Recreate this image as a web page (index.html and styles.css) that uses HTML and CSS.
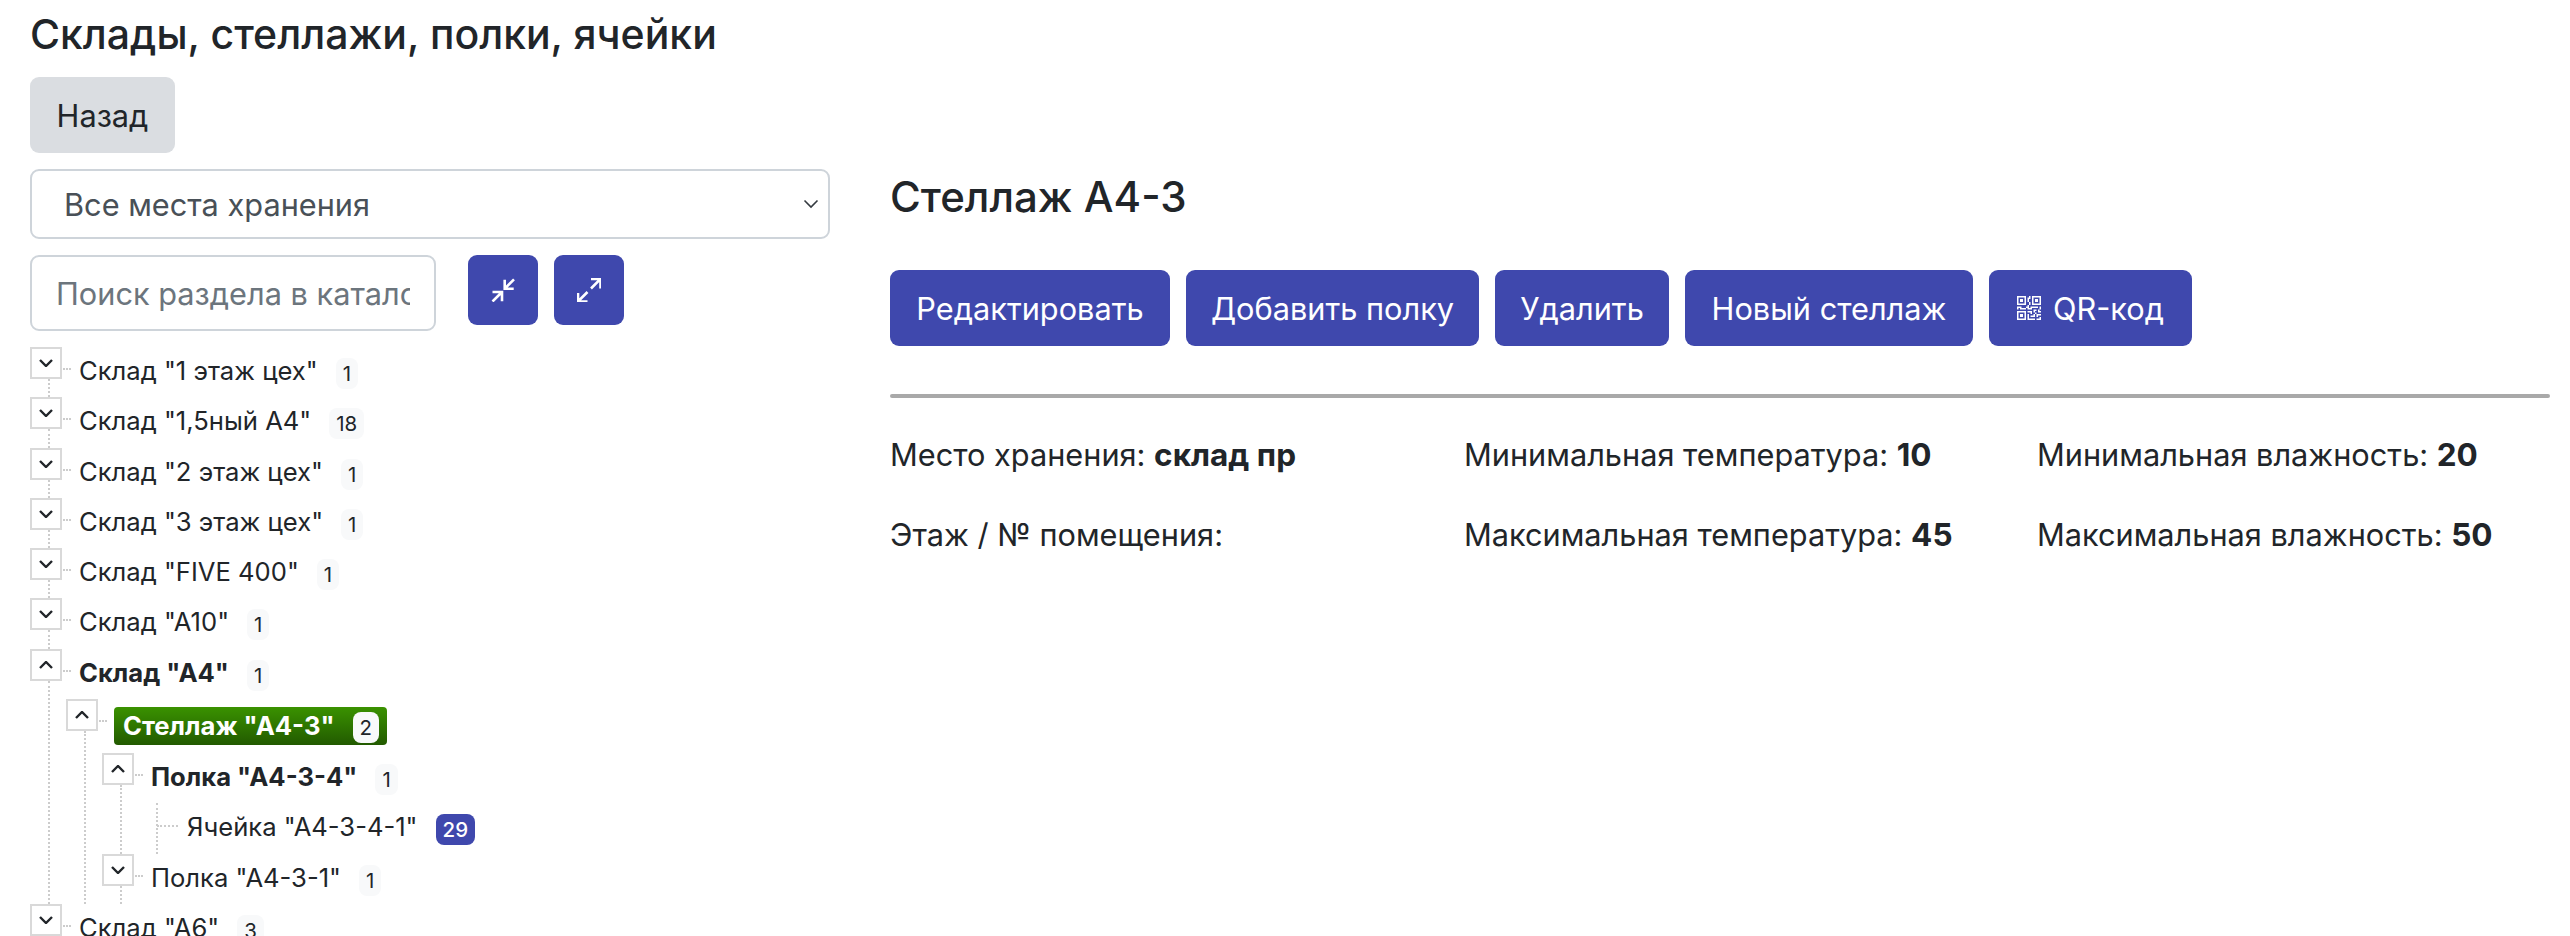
FILE: index.html
```html
<!DOCTYPE html>
<html lang="ru">
<head>
<meta charset="UTF-8">
<title>Склады, стеллажи, полки, ячейки</title>
<link rel="stylesheet" href="styles.css">
</head>
<body>
<div class="page">
	<div class="side">
		<h1 class="title">Склады, стеллажи, полки, ячейки</h1>
		<a class="btn btn-light" href="#">Назад</a>

		<div class="select-wrap">
			<select class="select"><option>Все места хранения</option></select>
			<svg class="select-arrow" viewBox="0 0 16 10"><path d="M1.500 1.500 8 8l6.500-6.500" fill="none" stroke="#343a40" stroke-width="1.6"/></svg>
		</div>

		<div class="search">
			<input class="search-input" type="text" placeholder="Поиск раздела в каталоге">
			<a class="btn-icon" href="#"><svg viewBox="0 0 24 24"><path d="M13.700 1.700v9h9M13.700 10.700 23 1.400M11 23.300v-9.300H1.500M11 14 1.500 23.500"/></svg></a>
			<a class="btn-icon" href="#"><svg viewBox="0 0 24 24"><path d="M14 1h9.500v9.500M23.500 1 14 10.500M1 15v8.500h9.500M1 23.500 10.500 14"/></svg></a>
		</div>

		<ul class="tree">
			<li class="node"><div class="row"><a class="toggle down"><svg viewBox="0 0 14 8"><path d="M1 1l6 6 6-6"/></svg></a><i class="dash"></i><span class="label">Склад "1 этаж цех"</span><span class="badge">1</span></div></li>
			<li class="node"><div class="row"><a class="toggle down"><svg viewBox="0 0 14 8"><path d="M1 1l6 6 6-6"/></svg></a><i class="dash"></i><span class="label">Склад "1,5ный А4"</span><span class="badge">18</span></div></li>
			<li class="node"><div class="row"><a class="toggle down"><svg viewBox="0 0 14 8"><path d="M1 1l6 6 6-6"/></svg></a><i class="dash"></i><span class="label">Склад "2 этаж цех"</span><span class="badge">1</span></div></li>
			<li class="node"><div class="row"><a class="toggle down"><svg viewBox="0 0 14 8"><path d="M1 1l6 6 6-6"/></svg></a><i class="dash"></i><span class="label">Склад "3 этаж цех"</span><span class="badge">1</span></div></li>
			<li class="node"><div class="row"><a class="toggle down"><svg viewBox="0 0 14 8"><path d="M1 1l6 6 6-6"/></svg></a><i class="dash"></i><span class="label">Склад "FIVE 400"</span><span class="badge">1</span></div></li>
			<li class="node"><div class="row"><a class="toggle down"><svg viewBox="0 0 14 8"><path d="M1 1l6 6 6-6"/></svg></a><i class="dash"></i><span class="label">Склад "А10"</span><span class="badge">1</span></div></li>
			<li class="node">
				<div class="row open"><a class="toggle"><svg viewBox="0 0 14 8"><path d="M1 7l6-6 6 6"/></svg></a><i class="dash"></i><span class="label">Склад "А4"</span><span class="badge">1</span></div>
				<ul class="tree sub">
					<li class="node">
						<div class="row active"><a class="toggle"><svg viewBox="0 0 14 8"><path d="M1 7l6-6 6 6"/></svg></a><i class="dash"></i><span class="label">Стеллаж "А4-3"<span class="badge">2</span></span></div>
						<ul class="tree sub">
							<li class="node">
								<div class="row open"><a class="toggle"><svg viewBox="0 0 14 8"><path d="M1 7l6-6 6 6"/></svg></a><i class="dash"></i><span class="label">Полка "А4-3-4"</span><span class="badge">1</span></div>
								<ul class="tree sub">
									<li class="leaf"><div class="row"><i class="leaf-dash"></i><span class="label">Ячейка "А4-3-4-1"</span><span class="badge badge-blue">29</span></div></li>
								</ul>
							</li>
							<li class="node"><div class="row"><a class="toggle down"><svg viewBox="0 0 14 8"><path d="M1 1l6 6 6-6"/></svg></a><i class="dash"></i><span class="label">Полка "А4-3-1"</span><span class="badge">1</span></div></li>
						</ul>
					</li>
				</ul>
			</li>
			<li class="node"><div class="row"><a class="toggle down"><svg viewBox="0 0 14 8"><path d="M1 1l6 6 6-6"/></svg></a><i class="dash"></i><span class="label">Склад "А6"</span><span class="badge">3</span></div></li>
		</ul>
	</div>

	<div class="main">
		<h2 class="heading">Стеллаж А4-3</h2>
		<div class="actions">
			<a class="btn" href="#">Редактировать</a>
			<a class="btn" href="#">Добавить полку</a>
			<a class="btn" href="#">Удалить</a>
			<a class="btn" href="#">Новый стеллаж</a>
			<a class="btn" href="#"><svg class="qr" viewBox="0 0 16 16" fill="#fff"><path d="M2 2h2v2H2V2Z"/><path d="M6 0v6H0V0h6ZM5 1H1v4h4V1ZM4 12H2v2h2v-2Z"/><path d="M6 10v6H0v-6h6Zm-5 1v4h4v-4H1Zm11-9h2v2h-2V2Z"/><path d="M10 0v6h6V0h-6Zm5 1v4h-4V1h4ZM8 1V0h1v2H8v2H7V1h1Zm0 5V4h1v2H8ZM6 8V7h1V6h1v2h1V7h5v1h-4v1H7V8H6Zm0 0v1H2V8H1v1H0V7h3v1h3Zm10 1h-1V7h1v2Zm-1 0h-1v2h2v-1h-1V9Zm-4 0h2v1h-1v1h-1V9Zm2 3v-1h-1v1h-1v1H9v1h3v-2h1Zm0 0h3v1h-2v1h-1v-2Zm-4-1v1h1v-2H7v1h2Z"/><path d="M7 12h1v3h4v1H7v-4Zm9 2v2h-3v-1h2v-1h1Z"/></svg>QR-код</a>
		</div>
		<hr class="divider">
		<div class="props">
			<div>Место хранения: <b>склад пр</b></div>
			<div>Минимальная температура: <b>10</b></div>
			<div>Минимальная влажность: <b>20</b></div>
			<div>Этаж / № помещения:</div>
			<div>Максимальная температура: <b>45</b></div>
			<div>Максимальная влажность: <b>50</b></div>
		</div>
	</div>
</div>
</body>
</html>
```

FILE: styles.css
```css
html,body{
	margin:0;
	height:100%;
	overflow:hidden;
}
body{
	font-family:Inter,"Liberation Sans",sans-serif;
	font-size:30.72px;
	color:#212529;
	background:#FFF;
}
a{
	text-decoration:none;
}
ul{
	list-style:none;
	margin:0;
	padding:0;
}
.page{
	display:flex;
	gap:60px;
	padding:0 20px 0 30px;
}
.side{
	width:800px;
	flex:none;
}
.main{
	flex:1;
	min-width:0;
	padding-top:173px;
}
.title{
	margin:0;
	padding-top:10px;
	height:77px;
	box-sizing:border-box;
	font-size:41px;
	line-height:48px;
	font-weight:500;
}
.btn{
	display:inline-flex;
	align-items:center;
	justify-content:center;
	height:76px;
	box-sizing:border-box;
	border-radius:9px;
	color:#FFF;
	background:#3F48AD;
}
.btn-light{
	display:flex;
	width:145px;
	color:#212529;
	background:#DADDE1;
}
.select-wrap{
	position:relative;
	margin-top:16px;
}
.select{
	display:block;
	width:100%;
	height:70px;
	padding:0 40px 0 32px;
	border:2px solid #CED4DA;
	border-radius:9px;
	font:inherit;
	color:#495057;
	background:#FFF;
	appearance:none;
}
.select-arrow{
	position:absolute;
	right:11px;
	top:30px;
	width:16px;
	height:10px;
}
.search{
	display:flex;
	align-items:flex-start;
	gap:16px;
	margin-top:16px;
}
.search-input{
	width:406px;
	height:76px;
	margin-right:16px;
	padding:0 24px;
	box-sizing:border-box;
	border:2px solid #CED4DA;
	border-radius:9px;
	font:inherit;
	color:#495057;
	outline:none;
}
.search-input::placeholder{
	color:#6C757D;
	opacity:1;
}
.btn-icon{
	display:flex;
	align-items:center;
	justify-content:center;
	width:70px;
	height:70px;
	border-radius:9px;
	background:#3F48AD;
}
.btn-icon svg{
	width:24px;
	height:24px;
	fill:none;
	stroke:#FFF;
	stroke-width:2.6;
}
.tree{
	margin-top:16px;
	font-size:25.6px;
}
.tree.sub{
	margin-top:0;
	padding-left:36px;
}
.node,.leaf{
	position:relative;
}
/* dotted line going down from a toggle */
.node::before{
	content:"";
	position:absolute;
	left:18px;
	top:32px;
	bottom:0;
	border-left:2px dotted #CCC;
}
.leaf::before{
	content:"";
	position:absolute;
	left:18px;
	top:0;
	bottom:0;
	border-left:2px dotted #CCC;
}
.row{
	display:flex;
	align-items:flex-start;
	height:50.3px;
}
.row.active{
	height:54px;
}
.toggle{
	display:flex;
	align-items:center;
	justify-content:center;
	flex:none;
	width:32px;
	height:32px;
	box-sizing:border-box;
	border:2px solid #D9D9D9;
	background:#FFF;
	position:relative;
}
.toggle svg{
	width:14px;
	height:8px;
	margin-left:-1px;
	fill:none;
	stroke:#212529;
	stroke-width:2.4;
}
.dash{
	width:8px;
	margin:21px 0 0 1px;
	border-top:2px dotted #CCC;
}
.leaf-dash{
	width:21px;
	margin:22px 0 0 19px;
	border-top:2px dotted #CCC;
}
.label{
	padding-left:8px;
	line-height:38px;
	margin-top:5px;
	white-space:nowrap;
}
.leaf .label{
	padding-left:9px;
}
.open .label{
	font-weight:700;
}
.active .label{
	display:flex;
	height:38px;
	margin:8px 0 0 7px;
	padding:0 8px 0 9px;
	border-radius:4px;
	font-weight:700;
	color:#FFF;
	background:linear-gradient(#3A9200,#225A00);
}
.badge{
	flex:none;
	height:31px;
	margin:11px 0 0 18px;
	padding:0 7px;
	border-radius:8px;
	font-size:20.48px;
	line-height:31px;
	font-weight:400;
	color:#212529;
	background:#F8F9FA;
}
.active .badge{
	margin:5px 0 0 18px;
}
.badge-blue{
	font-weight:500;
	color:#FFF;
	background:#3F48AD;
}
.heading{
	margin:0;
	font-size:42px;
	line-height:48px;
	font-weight:500;
}
.actions{
	display:grid;
	grid-template-columns:280px 293px 174px 288px 203px;
	gap:16px;
	margin-top:49px;
}
.qr{
	width:24px;
	height:24px;
	margin-right:12px;
}
.divider{
	height:4px;
	margin:48px 0 0;
	border:0;
	border-radius:2px;
	background:#A9A9A9;
}
.props{
	display:grid;
	grid-template-columns:574px 573px 1fr;
	grid-auto-rows:80px;
	margin-top:37px;
	line-height:40px;
	white-space:nowrap;
}
.props b{
	font-size:31.5px;
	font-weight:700;
}
```
